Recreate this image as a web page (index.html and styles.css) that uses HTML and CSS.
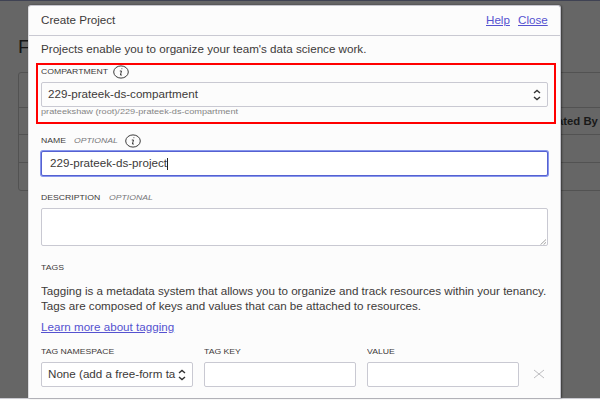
FILE: index.html
```html
<!DOCTYPE html>
<html lang="en">
<head>
<meta charset="utf-8">
<title>Create Project</title>
<link rel="stylesheet" href="styles.css">
</head>
<body>
<div class="page">
  <div class="page-title"><span class="wide">F</span></div>
  <div class="table">
    <div class="toolbar"></div>
    <div class="table-head"><span class="wide">ated By</span></div>
    <div class="table-row"></div>
    <div class="table-row"></div>
  </div>
</div>
<main class="modal">
  <header class="modal-head">
    <span class="wide">Create Project</span>
    <nav class="links"><a class="wide help">Help</a><a class="wide close">Close</a></nav>
  </header>
  <div class="modal-body">
    <div class="intro"><span class="wide">Projects enable you to organize your team's data science work.</span></div>
    <div class="label compartment"><span class="wide cap-compartment">COMPARTMENT</span>
      <svg class="info" viewBox="0 0 16 14"><ellipse cx="8" cy="7" rx="7.3" ry="6.1"/><path d="M8.5 3.7h.8M6.8 6h1.7L7.4 10h1.5"/></svg>
    </div>
    <div class="field select"><span class="wide">229-prateek-ds-compartment</span>
      <svg class="arrows" viewBox="0 0 8 12"><path d="M1 4l3-2.5L7 4M1 8l3 2.5L7 8"/></svg>
    </div>
    <div class="path"><span class="wide">prateekshaw (root)/229-prateek-ds-compartment</span></div>
    <div class="label name"><span class="wide cap-name">NAME</span><i class="wide cap-optional">OPTIONAL</i>
      <svg class="info" viewBox="0 0 16 14"><ellipse cx="8" cy="7" rx="7.3" ry="6.1"/><path d="M8.5 3.7h.8M6.8 6h1.7L7.4 10h1.5"/></svg>
    </div>
    <div class="field focused"><span class="wide cap-value">229-prateek-ds-project</span><span class="caret"></span></div>
    <div class="label description"><span class="wide cap-description">DESCRIPTION</span><i class="wide">OPTIONAL</i></div>
    <div class="field area"><svg class="grip" viewBox="0 0 7 6"><path d="M.5 5.7L6 .5M3.5 5.7L6 3.3"/></svg></div>
    <div class="label tags"><span class="wide">TAGS</span></div>
    <p class="wide tagging">Tagging is a metadata system that allows you to organize and track resources within your tenancy.<br>Tags are composed of keys and values that can be attached to resources.</p>
    <div class="learn"><a class="wide">Learn more about tagging</a></div>
    <div class="tag-grid">
      <div class="label"><span class="wide">TAG NAMESPACE</span></div>
      <div class="label"><span class="wide">TAG KEY</span></div>
      <div class="label"><span class="wide">VALUE</span></div>
      <span></span>
      <div class="field select namespace"><span class="wide">None (add a free-form ta</span>
        <svg class="arrows" viewBox="0 0 8 12"><path d="M1 4l3-2.5L7 4M1 8l3 2.5L7 8"/></svg>
      </div>
      <div class="field"></div>
      <div class="field"></div>
      <svg class="remove" viewBox="0 0 12 10"><path d="M1 1l10 8M11 1L1 9"/></svg>
    </div>
  </div>
  <div class="highlight"></div>
</main>
</body>
</html>
```
FILE: styles.css
```css
* { box-sizing: border-box; }
body {
  margin: 0;
  width: 600px;
  height: 400px;
  overflow: hidden;
  position: relative;
  background: #fcfcfc;
  color: #3c3a39;
  font: 10.8px/14px "Liberation Sans", Arial, sans-serif;
}
.wide {
  display: inline-block;
  white-space: nowrap;
  transform: scaleX(1.077);
  transform-origin: 0 50%;
}
.page {
  height: 399px;
  background: #666;
  border-top: 1px solid #3f4253;
  border-bottom: 1px solid #c9c9d0;
  overflow: hidden;
}
.page-title {
  height: 71px;
  padding: 35px 0 0 18px;
  color: #151515;
  font-size: 18px;
  line-height: 22px;
}
.table {
  margin-left: 18px;
  width: 600px;
  height: 119px;
  border: 1px solid #525252;
  border-radius: 3px;
}
.toolbar { height: 35px; border-bottom: 1px solid #525252; }
.table-head {
  height: 27px;
  padding: 7px 0 0 538px;
  border-bottom: 1px solid #525252;
  color: #191919;
  font-size: 10.4px;
  font-weight: bold;
}
.table-head .wide { transform: scaleX(1.09); }
.table-row { height: 28px; border-bottom: 1px solid #525252; }
.table-row:last-child { border: 0; }
.modal {
  position: absolute;
  left: 28px;
  top: 5px;
  width: 533px;
  height: 393px;
  background: #fcfcfc;
  border: 1px solid #c5c5cd;
  border-left-color: #dcdce0;
  border-bottom: 0;
  border-radius: 3px 3px 0 0;
  box-shadow: 1px 0 2px rgba(0, 0, 0, .45);
}
.modal-head {
  height: 30px;
  padding: 0 12px 2px;
  display: flex;
  align-items: center;
  border-bottom: 1px solid #c9c9d2;
}
.links { margin-left: auto; display: flex; }
a { color: #5552d0; text-decoration: underline; }
.help { width: 32px; }
.close { width: 30px; }
.modal-body { padding: 0 12px; }
.intro { height: 26px; display: flex; align-items: center; }
.label {
  height: 20px;
  display: flex;
  align-items: center;
  font-size: 7.8px;
  line-height: 18px;
}
.label .wide { transform: scaleX(1.11); }
.compartment .wide { margin-top: -1px; }
.label i { color: #77777a; }
.info {
  width: 16px;
  height: 14px;
  fill: none;
  stroke: #3c3c3c;
  stroke-width: 1;
}
.cap-compartment { width: 72px; }
.cap-name { width: 33px; }
.cap-optional { width: 51px; }
.cap-description { width: 68px; }
.field {
  width: 507px;
  height: 25px;
  border: 1px solid #c9c9d2;
  border-radius: 2px;
  background: #fff;
  display: flex;
  align-items: center;
}
.field .wide { margin-top: -2px; }
.select { padding: 0 6px; background: #fcfcfc; }
.arrows {
  width: 8px;
  height: 12px;
  margin-left: auto;
  fill: none;
  stroke: #333;
  stroke-width: 1.4;
}
.path {
  height: 10px;
  color: #858585;
  font-size: 8px;
  line-height: 10px;
}
.path .wide { transform: scaleX(1.145); }
.name { margin-top: 14px; margin-bottom: -1px; }
.focused {
  margin-top: 1px;
  padding-left: 8px;
  border-color: #5561d1;
  box-shadow: 0 0 0 1px #8796ed;
}
.cap-value { width: 117px; }
.caret { width: 1px; height: 12px; background: #222; }
.description { margin-top: 12px; }
.area {
  height: 38px;
  align-items: flex-end;
  justify-content: flex-end;
}
.grip { width: 7px; height: 6px; fill: none; stroke: #888; stroke-width: .8; }
.tags { margin-top: 12px; }
.tagging { margin: 6px 0 0; line-height: 14.5px; }
.learn { margin-top: 7px; height: 15px; line-height: 15px; }
.tag-grid {
  margin-top: 7px;
  display: grid;
  grid-template-columns: 152px 152px 152px 12px;
  column-gap: 11.2px;
}
.tag-grid .field { width: 152px; }
.namespace { background: #fff; }
.remove {
  width: 12px;
  height: 10px;
  margin-left: 2px;
  margin-top: -2px;
  align-self: center;
  fill: none;
  stroke: #bdbdc0;
}
.highlight {
  position: absolute;
  left: 7px;
  top: 57px;
  width: 520px;
  height: 61px;
  border: 2px solid #f00;
}
```
